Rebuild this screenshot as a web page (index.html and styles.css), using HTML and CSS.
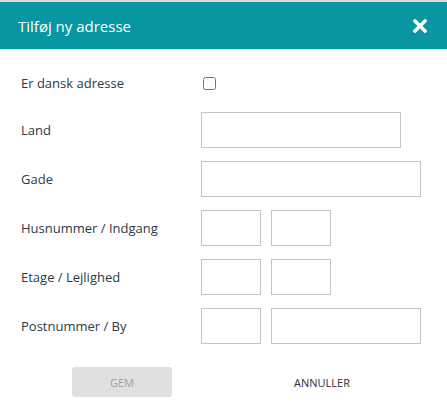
FILE: index.html
```html
<!DOCTYPE html>
<html lang="da">
<head>
<meta charset="utf-8">
<title>Tilføj ny adresse</title>
<link rel="stylesheet" href="styles.css">
</head>
<body>
<div class="dialog">
  <div class="header">
    <h1 class="title">Tilføj ny adresse</h1>
    <button class="close" aria-label="Luk">
      <svg width="14" height="14" viewBox="0 0 14 14"><path d="M2 2 L12 12 M12 2 L2 12" stroke="#fff" stroke-width="3.4" stroke-linecap="square" fill="none"/></svg>
    </button>
  </div>
  <form class="form">
    <div class="row check-row">
      <label class="label">Er dansk adresse</label>
      <input type="checkbox" class="check">
    </div>
    <div class="row">
      <label class="label">Land</label>
      <input class="input w200">
    </div>
    <div class="row">
      <label class="label">Gade</label>
      <input class="input w220">
    </div>
    <div class="row">
      <label class="label">Husnummer / Indgang</label>
      <div class="pair">
        <input class="input w60">
        <input class="input w60">
      </div>
    </div>
    <div class="row">
      <label class="label">Etage / Lejlighed</label>
      <div class="pair">
        <input class="input w60">
        <input class="input w60">
      </div>
    </div>
    <div class="row">
      <label class="label">Postnummer / By</label>
      <div class="pair">
        <input class="input w60">
        <input class="input w150">
      </div>
    </div>
    <div class="actions">
      <button type="button" class="btn btn-save" disabled>GEM</button>
      <button type="button" class="btn btn-cancel">ANNULLER</button>
    </div>
  </form>
</div>
</body>
</html>
```
FILE: styles.css
```css
* { box-sizing: border-box; }
html, body { margin: 0; padding: 0; background: #fff; }
body {
  font-family: "Open Sans", "Noto Sans", sans-serif;
  color: #2b3a4a;
}
.dialog {
  border-top: 2px solid #d9d9d9;
  width: 447px;
}
.header {
  height: 48px;
  background: #0897a2;
  display: flex;
  align-items: center;
  justify-content: space-between;
  padding: 0 20px 0 18px;
  border-bottom: 1px solid #e3f1f2;
}
.title {
  margin: 0;
  font-size: 15px;
  font-weight: 400;
  color: #fff;
}
.close {
  border: 0;
  background: none;
  padding: 0;
  width: 14px;
  height: 14px;
  display: flex;
  cursor: pointer;
}
.form {
  display: flex;
  flex-direction: column;
  gap: 13px;
  padding: 15px 0 0 21px;
}
.row {
  display: flex;
  align-items: center;
  height: 36px;
}
.check-row { margin-bottom: -2px; }
.label {
  width: 180px;
  font-size: 13px;
  color: #2b3a4a;
}
.check {
  margin: 0 0 0 2px;
  width: 13px;
  height: 13px;
}
.input {
  height: 36px;
  border: 1px solid #c4c4c4;
  border-radius: 0;
  padding: 0 6px;
  font: inherit;
  margin: 0;
  outline: none;
}
.w200 { width: 200px; }
.w220 { width: 220px; }
.w60 { width: 60px; }
.w150 { width: 150px; }
.pair {
  display: flex;
  gap: 10px;
}
.actions {
  display: flex;
  justify-content: center;
  gap: 100px;
  margin-top: 10px;
  margin-left: -24px;
}
.btn {
  width: 100px;
  height: 30px;
  border: 0;
  border-radius: 3px;
  font-family: inherit;
  font-size: 11px;
  background: transparent;
  padding: 0;
}
.btn-save {
  background: #e0e0e0;
  color: #a0a0a0;
}
.btn-cancel {
  color: #2e2e3e;
}
```
